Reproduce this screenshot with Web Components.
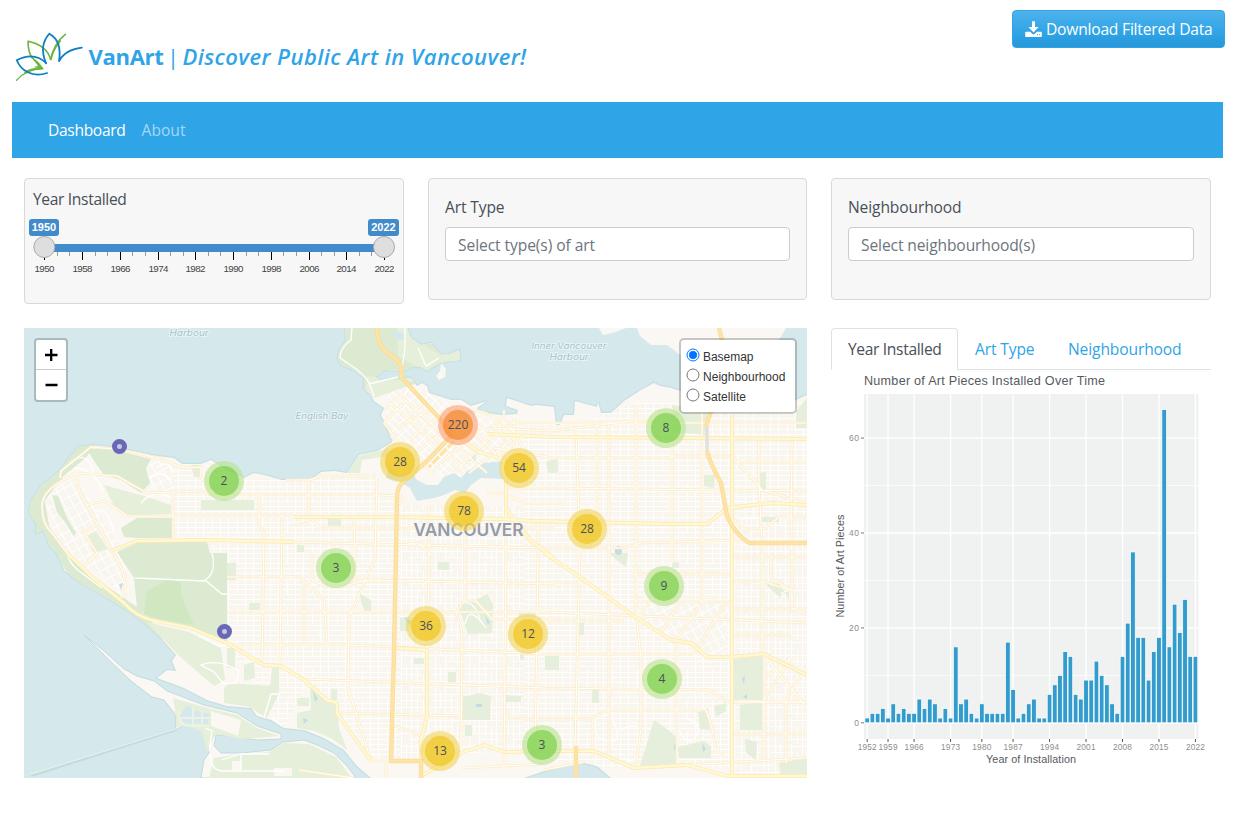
<!DOCTYPE html>
<html lang="en">
<head>
<meta charset="utf-8">
<title>VanArt</title>
<style>
  body { margin: 0; background: #fff; color: #495057; font: 16px/24px "Open Sans", "Noto Sans", sans-serif; }
</style>
</head>
<body>
<van-app></van-app>
<script>
const define = (name, html, setup) => customElements.define(name, class extends HTMLElement {
  connectedCallback() {
    if (this.shadowRoot) return;
    const root = this.attachShadow({ mode: 'open' });
    const t = document.createElement('template');
    t.innerHTML = html;
    root.append(t.content.cloneNode(true));
    if (setup) setup.call(this, root);
  }
});

/* Text run tracked so that it fills the width given in its "w" attribute. */
define('fit-text', `<style>:host{display:inline-block;white-space:nowrap}span{display:inline-block}</style><span></span>`, function (root) {
  const s = root.querySelector('span');
  s.textContent = this.getAttribute('text');
  const w = +this.getAttribute('w');
  const n = s.textContent.length;
  s.style.letterSpacing = ((w - s.getBoundingClientRect().width) / n) + 'px';
});

define('van-logo', `<style>:host{display:block;width:80px;height:90px}svg{display:block;overflow:visible}</style>
<svg width="80" height="90" viewBox="0 0 224 270" preserveAspectRatio="none" fill="none" stroke-linecap="round">
  <g stroke="#6db33f" fill="none">
    <path d="M183 103C160 122 148 145 142 180C137 158 122 134 79 124C78 143 82 160 89 173" stroke-width="4.500"/>
    <path d="M142 178C148 152 160 135 170 122C157 138 150 150 145 165" stroke-width="4"/>
    <path d="M91 174L120 206C88 207 65 218 46 241" stroke-width="3.500"/>
    <path d="M91 174Q110 184 120 206L97 201L107 198Z" fill="#6db33f" stroke-width="1.500"/>
    <path d="M116 206C88 205 76 213 70 218" stroke-width="5"/>
  </g>
  <g stroke="#0b7fc2" stroke-width="5">
    <path d="M129 190C113 149 121 121 138 101C162 115 172 141 165 185C176 160 199 147 229 143"/>
    <path d="M129 189C105 165 77 164 47 181C58 211 90 234 132 219"/>
  </g>
</svg>`);

define('download-button', `<style>
:host{display:block}
button{box-sizing:border-box;width:213px;height:38px;display:flex;align-items:center;padding:0 12px;gap:4px;border:1px solid #2fa4e7;border-radius:4px;background:linear-gradient(#4fb2eb,#2fa4e7 60%,#2797d8);color:#fff;font:15.6px/24px "Open Sans",sans-serif}
svg{flex:none}
</style><button><svg width="17" height="17" viewBox="0 0 17 17" fill="#fff"><path d="M7 .3h3v5.800h3.600L8.500 11.400 3.400 6.100h3.600z"/><path fill-rule="evenodd" d="M1 10.800h4.200l2 2q1.300 1.100 2.600 0l2-2H16q.8 0 .8.8v3.600q0 .8-.8.8H1q-.8 0-.8-.8v-3.600q0-.8.8-.8zM12 13.200h1v1h-1zM14 13.200h1v1h-1z"/></svg><fit-text text="Download Filtered Data" w="166.5"></fit-text></button>`);

define('van-header', `<style>
:host{display:flex;height:102px;align-items:flex-start}
h1{margin:41px 0 0 8.5px;font:700 22px/30px "Open Sans",sans-serif;color:#2fa4e7;display:flex;flex:1}
.sep{font-weight:400;width:19px;text-align:center} em{font-weight:600}
download-button{margin:10px 10px 0 0}
</style><van-logo></van-logo><h1><fit-text text="VanArt" w="75"></fit-text><span class="sep">|</span><em><fit-text text="Discover Public Art in Vancouver!" w="344"></fit-text></em></h1><download-button></download-button>`);

define('van-nav', `<style>
:host{display:flex;align-items:center;gap:16px;margin:0 12px;height:56px;padding-left:36px;background:#2fa4e7;color:#fff;font-size:15.6px}
.off{color:#a4d8f6}
</style><fit-text text="Dashboard" w="77.5"></fit-text><fit-text class="off" text="About" w="44"></fit-text>`);

define('filter-card', `<style>
:host{display:block;box-sizing:border-box;background:#f7f7f7;border:1px solid #d9d9d9;border-radius:4px;height:122px;padding:16px}
:host([slim]){height:126px;padding:8px 4px}
::slotted(.field){box-sizing:border-box;display:flex;align-items:center;margin-top:8px;height:34px;padding:1px 12px 0;border:1px solid #ccc;border-radius:4px;background:#fff;color:#6c757d}
</style><slot></slot>`);

define('year-slider', `<style>:host{display:block;height:62px}svg{display:block}</style><svg width="370" height="62"></svg>`, function (root) {
  const x0 = 15.3, x1 = 355;
  let s = `<rect x="${x0}" y="27" width="${x1 - x0}" height="8" fill="#428bca"/>`;
  for (let i = 0; i <= 27; i++) {
    const x = Math.round(x0 + (x1 - x0) * i / 27), big = i % 3 === 0;
    s += `<rect x="${x}" y="35" width="1" height="${big ? 8 : 4}" fill="${big ? '#000' : '#999'}"/>`;
    if (big) s += `<text x="${x + .5}" y="55" text-anchor="middle" textLength="20" font-size="9.800" fill="#444">${1950 + i / 3 * 8}</text>`;
  }
  for (const x of [x0, x1]) s += `<circle cx="${x}" cy="30" r="10.5" fill="#dedede" stroke="#aaa"/>`;
  s += `<rect x="0" y="2" width="30" height="17" rx="3" fill="#428bca"/><rect x="339" y="2" width="31" height="17" rx="3" fill="#428bca"/>`;
  s += `<g fill="#fff" font-weight="700" font-size="11" text-anchor="middle"><text x="15" y="14">1950</text><text x="354.5" y="14">2022</text></g>`;
  root.querySelector('svg').innerHTML = `<g font-family="Liberation Sans, sans-serif">${s}</g>`;
});

define('cluster-pin', `<style>
:host{position:absolute;box-sizing:border-box;width:40px;height:40px;margin:-20px 0 0 -20px;padding:5px;border-radius:50%;background:rgba(181,226,140,.6);--in:rgba(110,204,57,.6)}
:host([kind=m]){background:rgba(241,211,87,.6);--in:rgba(240,194,12,.6)}
:host([kind=l]){background:rgba(253,156,115,.6);--in:rgba(241,128,23,.6)}
div{width:30px;height:30px;border-radius:50%;background:var(--in);text-align:center;font:12px/30px "Open Sans",sans-serif;color:#495057}
</style><div><slot></slot></div>`);

define('art-pin', `<style>:host{position:absolute;box-sizing:border-box;width:15px;height:15px;margin:-8px 0 0 -8px;border:5px solid #6868b7;border-radius:50%;background:#c6c8e0}</style>`);

define('zoom-control', `<style>
:host{position:absolute;left:10px;top:10px;box-sizing:border-box;width:34px;height:64px;border:2px solid rgba(0,0,0,.2);border-radius:4px;background:#fff;background-clip:padding-box}
svg{display:block}
</style><svg width="30" height="60" stroke="#000" stroke-width="2.300"><path d="M9 15h12.500M15.200 9v12M9.500 45h12"/><path d="M0 29.500h30" stroke="#ccc" stroke-width="1"/></svg>`);

define('layer-control', `<style>
:host{position:absolute;right:10px;top:10px;box-sizing:border-box;width:118px;height:76px;padding:7px 0 0 5px;border:2px solid rgba(0,0,0,.2);border-radius:5px;background:#fff;background-clip:padding-box;font:12px/20px "Liberation Sans",sans-serif;color:#333}
label{display:flex;height:20px;gap:3px} svg{margin-top:1px;flex:none}
</style>
<label><svg width="14" height="14"><circle cx="7" cy="7" r="6" fill="#fff" stroke="#0075ff"/><circle cx="7" cy="7" r="4" fill="#0075ff"/></svg><fit-text text="Basemap" w="50.5"></fit-text></label>
<label><svg width="14" height="14"><circle cx="7" cy="7" r="6" fill="#fff" stroke="#767676"/></svg><fit-text text="Neighbourhood" w="82.500"></fit-text></label>
<label><svg width="14" height="14"><circle cx="7" cy="7" r="6" fill="#fff" stroke="#767676"/></svg><fit-text text="Satellite" w="43"></fit-text></label>`);

define('art-map', `<style>:host{display:block;position:relative;overflow:hidden;height:450px;background:#d5e8eb}svg{display:block}</style>
<svg width="783" height="450" viewBox="0 0 783 450">
<defs>
  <pattern id="g1" width="25" height="31" patternUnits="userSpaceOnUse"><rect width="25" height="31" fill="#f9f5ef"/><path d="M0 3.500H25M0 8.500H25M0 13.500H25M0 18.500H25M0 23.500H25M0 28.500H25M4.500 0V31M13.500 0V18M21.500 0V31" stroke="#fffefd" stroke-width="1" fill="none"/></pattern>
  <pattern id="g2" width="34" height="26" patternUnits="userSpaceOnUse"><rect width="34" height="26" fill="#f9f5ef"/><path d="M0 2.500H34M0 8.500H22M0 15.500H34M12 21.500H34M3.500 0V26M8.500 0V15M13.500 0V26M19.500 0V20M25.500 8V26M30.500 0V26" stroke="#fffefd" stroke-width="1" fill="none"/></pattern>
  <pattern id="g3" width="9" height="6" patternUnits="userSpaceOnUse" patternTransform="rotate(45)"><rect width="9" height="6" fill="#f9f5ef"/><path d="M0 .5H9M.5 0V6" stroke="#fff" stroke-width="1.200"/></pattern>
  <pattern id="g4" width="8" height="10" patternUnits="userSpaceOnUse" patternTransform="rotate(-28)"><rect width="8" height="10" fill="#f9f5ef"/><path d="M0 .5H8M.5 0V10" stroke="#fff"/></pattern>
  <clipPath id="land"><path id="coast" d="M5 185L7 173L17 158L37 142L45 130L55 119L68 117L87 119L113 124L133 128L150 130L158 136L167 136L177 136L187 132L195 137L203 142L212 146L220 150L230 145L240 147L257 152L270 152L285 153L297 144L310 143L323 145L335 127L344 125L353 123L360 119L367 115L369 112L367 110L360 93L357 87L360 80L350 73L347 67L340 60L340 50L330 42L317 37L314 30L315 22L322 13L321 0H383L387 10L397 17L407 15L417 27L426 26L435 22L436 32L426 33L417 35L409 39L403 43L397 39L388 39L380 43L360 42L351 49L360 54L373 50L387 50L393 58L398 55L403 58L405 65L418 69L427 72L437 72L447 78L463 73L453 80L457 85L463 85L477 87L493 86L494 82L482 78L483 70L507 78L512 77L530 79L532 97L536 97L540 87L550 87L551 73L573 79L574 74L577 85L587 85L600 73L617 62L630 55L636 58L647 60L657 63L680 70L700 76L772 72L783 67V450H587L573 438L557 434L540 437L520 443L500 450H347L333 438L320 422L300 410L280 402L260 400L247 392L233 388L227 380L203 378L183 372L160 360L133 350L143 342L152 343L148 333L152 327L137 310L123 297L110 287L87 272L57 255L40 242L33 225L25 217L20 202L12 205L12 195Z"/></clipPath>
</defs>
<rect width="783" height="450" fill="#d5e8eb"/>
<g stroke="#c2dbe1" stroke-width="2.500" fill="none" opacity=".7"><use href="#coast"/></g>
<use href="#coast" fill="#fbf8f3"/>
<path d="M575 0L579 7L592 4L602 0ZM613 0L616 8L627 17L643 17L650 22L657 28L735 35L752 17L762 0ZM417 35L422 41L421 49L415 52L412 48L416 43Z" fill="#fbf8f3"/>
<path d="M60 307L80 323L100 341L113 348L130 353L143 363L180 377L213 385L233 398L257 406V411L233 412L207 408L192 407L190 418L197 425L217 425L247 422L259 414L280 412L293 417L310 425L323 438L332 450H177L180 432L185 425L183 412L177 398L160 397L152 402L151 386L140 372L128 369L107 353L83 330Z" fill="#fbf8f3" stroke="#c2dbe1" stroke-width="1"/>
<g clip-path="url(#land)">
  <path d="M150 137L220 151L352 145V225L260 400L203 315L203 225L149 210Z" fill="url(#g1)"/>
  <path d="M262 165H376V432L346 430L303 372L262 340Z" fill="url(#g1)"/>
  <path d="M376 178H552V418L437 426L376 432Z" fill="url(#g2)"/>
  <path d="M500 95L552 95L612 75H783V440H560L500 422Z" fill="url(#g1)"/>
  <path d="M708 190H783V450H708Z" fill="url(#g2)"/>
  <path d="M365 67L380 54L478 98L500 130L445 145L420 150L375 115L360 90Z" fill="url(#g3)"/>
  <path d="M20 170L52 148L65 170L100 223L105 275L80 250L35 220Z" fill="url(#g4)"/>
  <path d="M605 293L655 315L700 330L705 275H625Z" fill="url(#g4)"/>
  <path d="M125 130L150 138V165L125 160Z" fill="url(#g4)"/>
  <path d="M5 185L7 165L55 119L68 117L60 128L38 146L18 172L23 200L45 232L78 258L110 280L140 310L115 292L57 258L34 228L20 202L12 205Z" fill="#dbead0" stroke="#dbead0" stroke-width="5"/>
  <path d="M63 121L87 121L127 131L122 140L126 155L117 165L97 152L80 147L70 133ZM97 200L113 190H148V210H113L100 209ZM93 224L115 214H183L186 225H203V315L160 297L125 290L113 280L110 250Z" fill="#dbead0"/>
  <path d="M80 157L127 170L147 177V186L103 188L90 178ZM123 294L165 304L197 320L201 352L190 358L175 345L155 328ZM200 360L205 355L246 358L248 340L255 340V365L243 390L225 379L200 375ZM177 172H230V182H177ZM62 208L72 203L84 221L70 225ZM167 137H178V149H170Z" fill="#e6efda"/>
  <path d="M123 263L143 252L157 254L157 268L170 297L140 292L120 287Z" fill="#d1e7c2"/>
  <path d="M28 167L34 168L43 190L52 205L50 208L40 193L33 184Z" fill="#dbead0"/>
  <path d="M203 235H212V252H203ZM225 275H236V282H225ZM203 320H211V340H203ZM220 337L230 334L231 350L220 353ZM304 191H317V198H304ZM273 217H280V224H273ZM335 265L347 272L347 283L340 283ZM273 370H285V378H273ZM307 361H313V372H307ZM286 360L300 370L313 378L315 400L323 422L307 410L290 403L273 400V385L287 382ZM390 330H400V336H390ZM424 344H432V354H424ZM414 234H425V242H414ZM376 290L385 288V303H376ZM434 277L450 273L463 266L469 276L468 305L444 306ZM495 283H512V289H495ZM439 369L455 365L467 368L466 392H438ZM482 367L497 368V374H482ZM521 328H535V342H521ZM555 295H560V307H555ZM568 361H575V375H568ZM441 397H448V408H441ZM496 326H500V332H496ZM323 145L335 128L365 120V128L338 132L336 145ZM440 82L453 82L450 88ZM446 127L452 124L452 133L445 133ZM522 133L534 131V145H524ZM648 77L683 82V107L648 104ZM734 145L742 144V162H734ZM680 147L691 147L690 160L680 158ZM737 189H755V194H737ZM586 225H604L602 239L590 230ZM648 235L655 234V240H648ZM741 254L756 256L765 272V264H757V270L745 260ZM710 331L740 328V372H710ZM716 377L738 374V402H716ZM630 392L643 401L653 409L653 436L616 438ZM654 419L680 413L687 418V430H655ZM674 384L684 380L686 402L676 401ZM721 411L733 414L732 432L722 425ZM755 435L783 430V450H757ZM772 83L783 70V100H772ZM690 378L702 375V383L692 389Z" fill="#e6efdc"/>
  <path d="M315 0H387L397 17L407 15L417 27L436 22L436 32L417 35L403 43L397 39L380 43L378 50L395 55L350 67L340 60L335 45L317 37L312 25Z" fill="#dbead0"/>
  <path d="M373 0L383 0L400 17L417 27L436 22V33L415 34L403 42L392 38L374 28ZM343 48L373 52L388 48L385 58L350 70L342 60Z" fill="#e6efda"/>
  <path d="M368 5L373 3L382 7L380 12L373 12Z" fill="#d5e8eb"/>
</g>
<path d="M149 370L180 379L213 387L233 400L255 408L218 411L192 406L185 418L182 406L162 396L152 400L152 388ZM190 430L215 426L245 424L260 415L285 416L312 429L328 450H185ZM178 403L184 402L188 410L183 424Z" fill="#e6efda"/>
<path d="M187 383L217 392L214 408L187 398ZM208 433H217V442H208ZM250 440H268V448H250Z" fill="#fbf8f3"/>
<path d="M161 379L166 377L168 382L186 386L184 396L160 395L156 388Z" fill="#d5e8eb"/><path d="M155 383Q154 397 164 398H185M169 380V397M157 390H186M178 383V397" stroke="#f1f4e6" stroke-width="1.500" fill="none"/>
<path d="M365 139L375 148L387 143L393 152L403 157L414 157L420 149L430 145L437 150L443 143L460 135L480 133L476 140L480 151L457 150L447 157L441 165L431 162L420 167L410 170L393 173L386 160L373 152L362 150Z" fill="#d5e8eb"/>
<path d="M7 448L152 402" stroke="#c2dbe1" stroke-width="2" fill="none"/><path d="M7 446L152 401" stroke="#e9f1e4" stroke-width="1"/>
<path d="M591 220Q597 214 598 224Q596 230 591 225ZM452 376H458V379H452ZM718 351L721 347L720 357ZM719 369L723 366V371ZM650 416L653 420L650 422ZM678 415L682 421L679 424ZM380 289L388 293L386 298ZM461 288L466 294L464 297ZM289 363L294 371L291 374ZM279 390L284 392L280 396ZM95 256L99 255L97 262Z" fill="#c3dde5"/>
<g fill="none" stroke="#fff" stroke-width="1.300">
  <path d="M328 0L327 12Q316 20 316 30L325 36Q344 48 347 60L350 68M381 0V20L378 40M394 20L402 38L415 30M345 56L374 49M43 225Q45 235 55 243L78 260M188 225Q193 245 181 252L198 266L203 266M111 250L181 253M185 423L188 403L181 400M186 425Q186 442 198 443H260M197 432L217 426H245M217 427V442M175 308L195 318L203 317M177 337Q195 330 215 343L212 355L200 356L190 344ZM132 140Q145 130 148 145M126 150Q140 140 148 155M117 175Q130 160 148 170M45 135Q65 120 70 147M50 140Q72 140 79 165M72 183Q85 180 90 205M240 390L247 366H256M248 390L258 398M438 276Q448 270 456 290M441 296Q445 275 462 300M572 390Q585 380 592 400T575 410Q568 400 572 390M597 402Q620 390 616 415T600 430M660 390Q680 395 672 408T655 402"/>
</g>
<g id="roads"></g>
<path d="M683 98V123" stroke="#e2e1dd" stroke-width="3.500" fill="none"/>
<g font-family="Inter, sans-serif" font-style="italic" text-anchor="middle" font-size="8.500" fill="#a5c4cd" stroke="#eef6f7" stroke-width="1.500" paint-order="stroke">
  <text x="165" y="8.400" textLength="39" lengthAdjust="spacingAndGlyphs">Harbour</text><text x="545" y="21" textLength="75" lengthAdjust="spacingAndGlyphs">Inner Vancouver</text><text x="545" y="32" textLength="39" lengthAdjust="spacingAndGlyphs">Harbour</text><text x="298" y="90.500" textLength="53" lengthAdjust="spacingAndGlyphs">English Bay</text>
</g>
<text x="444.500" y="207.500" text-anchor="middle" textLength="110" lengthAdjust="spacingAndGlyphs" font-family="Inter, sans-serif" font-weight="600" font-size="17" fill="#929bab" stroke="#fbf8f3" stroke-width="1" paint-order="stroke">VANCOUVER</text>
</svg>
<slot></slot>`, function (root) {
  const minor = [
    'M36 150L37 143L67 119L90 121L113 125L133 130L160 140L177 139V150L187 160H200', 'M52 145L93 148L123 165L177 163L187 167H352L380 168',
    'M53 145Q18 160 18 178T28 205L43 225', 'M52 145L56 165L88 223', 'M62 177L80 173Q90 178 103 188H270', 'M72 198L60 204L73 225L58 241', 'M88 223Q100 240 102 260L96 272',
    'M149 164V212', 'M235 167V197L240 205L238 337', 'M258 187L256 338', 'M262 152H285L297 148H352', 'M285 152V188L295 200H530',
    'M330 188L331 225L330 252L352 253H400', 'M353 150L351 230L325 290L324 360L347 433', 'M262 249H276L300 272L303 317', 'M280 255V317', 'M288 225V252Q300 260 320 258L345 252L530 256',
    'M203 249H270', 'M203 284H520L783 295', 'M203 317H325L520 326H667L678 320', 'M260 340L280 351L520 360L685 362L705 374H783', 'M313 385L437 388', 'M480 391H566L584 382H682',
    'M367 396L397 408', 'M262 214L520 220H600L617 215L720 212', 'M441 165V272L432 285Q438 298 438 310L437 425', 'M405 177V250L402 325', 'M482 170V225L480 440', 'M514 193V225L511 430',
    'M552 100L556 225L551 418', 'M573 95V130L573 195', 'M585 94V430', 'M612 77V285L617 330V400L612 438', 'M648 80V235', 'M653 312V435', 'M678 77V275', 'M735 110L735 155L738 215V328', 'M768 112L767 215', 'M768 222V275',
    'M463 100L530 103L612 92H648', 'M470 120L530 130H648V128L708 128', 'M480 160H530L783 163', 'M708 134H783', 'M708 128L738 162L783 175', 'M520 255H565', 'M609 246H708M612 273H708M520 293H600',
    'M708 229H783M708 254H740L767 262M708 281H783M708 307H767M708 374H783M708 406H783M740 328V435M762 374V435', 'M708 190L720 201H740L755 189H783', 'M747 225V250L768 263V280L783 287', 'M440 273H452L468 291H530',
    'M625 275L612 292M655 275L638 303M677 275L652 312M702 275L673 320', 'M740 327L783 380M740 372L767 330M767 330L740 350M783 338L762 372', 'M569 391V430M682 382L688 400L692 422L700 428',
    'M437 440L520 436M520 442L560 434M610 440L783 430', 'M480 82L480 151M470 95H783M490 90V125M450 82Q490 90 500 125', 'M360 83L379 65M366 75L440 140M376 68L463 145M372 100L410 80M385 112L420 85M395 122L430 95M410 140L460 98M430 145L474 102M445 145L490 110M402 72L383 90M450 104L490 145',
    'M383 72L360 95L385 128L410 145', 'M462 165H480L500 175H540', 'M382 170L370 180M385 176L382 178M270 197L285 195M373 217L395 215L410 230', 'M362 435V450M347 433H397M275 442L330 450'
  ];
  const mid = ['M87 223L113 213L187 212L270 214', 'M43 225L67 248L100 275Q112 288 127 292L167 300L203 315L240 337L257 338L280 352L303 372L313 375V385L347 433',
    'M270 189L367 189L480 191L507 193L647 196H683L703 180L747 175L783 177', 'M463 106L530 109L783 111', 'M483 182L507 213L530 230', 'M520 225L560 252L610 288L647 312L667 315L683 329H707L740 326L783 347',
    'M708 87V448', 'M370 320L403 322V388L397 412V434', 'M397 448L437 425L460 417L480 424L520 423H570L610 440L663 437L703 448H783', 'M482 150V190', 'M420 99L455 124L475 130'];
  const hwy = ['M353 0Q353 20 368 28Q380 35 377 49L417 92L427 108L403 133L378 155Q373 160 373 170L372 225L370 325L367 433H397V450', 'M695 0L698 12M687 83L682 98M683 123Q686 135 697 155L703 188Q710 205 725 215H783', 'M552 418V450'];
  const draw = (list, a, wa, b, wb) => `<g fill="none" stroke-linejoin="round"><g stroke="${a}" stroke-width="${wa}">${list.map(d => `<path d="${d}"/>`).join('')}</g><g stroke="${b}" stroke-width="${wb}">${list.map(d => `<path d="${d}"/>`).join('')}</g></g>`;
  root.querySelector('#roads').innerHTML = draw(minor, '#fdecc4', 2.7, '#fffefa', 1.2) + draw(mid, '#fde7b4', 3.8, '#fff9d2', 2.4) + draw(hwy, '#fbdc96', 4.4, '#fee3a6', 3) +
    '<path d="M425 110L400 136M430 113L405 139" stroke="#fee3a6" stroke-width="3" stroke-dasharray="9 2"/>';
});

define('tab-bar', `<style>
:host{display:flex;box-sizing:border-box;height:42px;border-bottom:1px solid #dee2e6;color:#2fa4e7;font-size:15.6px}
div{box-sizing:border-box;height:42px;padding:8px 16px;border:1px solid transparent}
.on{color:#495057;background:#fff;border-color:#dee2e6 #dee2e6 #fff;border-radius:4px 4px 0 0;width:127px}
.b{width:93px}
</style><div class="on"><fit-text text="Year Installed" w="93.500"></fit-text></div><div class="b"><fit-text text="Art Type" w="59.500"></fit-text></div><div><fit-text text="Neighbourhood" w="113.500"></fit-text></div>`);

define('year-chart', `<style>:host{display:block}svg{display:block}</style><svg width="380" height="400" viewBox="831 370 380 400"></svg>`, function (root) {
  const v = [1,2,2,3,1,4,2,3,2,2,5,3,5,4,1,3,1,16,4,5,2,1,4,2,2,2,2,17,7,1,2,4,5,1,1,6,8,10,15,14,6,5,9,9,13,10,8,4,2,14,21,36,18,18,9,15,18,66,16,25,19,26,14,14];
  const X = i => 867.2 + i * 5.21, Y = n => 722.8 - n * 4.745;
  let s = '<rect x="864" y="394" width="334.500" height="345" fill="#f0f2f2"/>';
  for (const n of [10, 30, 50]) s += `<path d="M864 ${Y(n)}H1198.500" stroke="#fff" stroke-width=".7"/>`;
  for (const n of [0, 20, 40, 60]) s += `<path d="M864 ${Y(n)}H1198.500" stroke="#fff" stroke-width="1.300"/><path d="M861 ${Y(n)}H864" stroke="#777"/><text x="859" y="${Y(n) + 3}" text-anchor="end" font-size="8.500" fill="#8d8d8d" ${n ? 'textLength="10"' : ''}>${n}</text>`;
  [0, 4, 9, 16, 22, 28, 35, 42, 49, 56, 63].forEach((i, k) => {
    s += `<path d="M${X(i)} 394V739" stroke="#fff" stroke-width="1.300"/><path d="M${X(i)} 739V742" stroke="#555"/><text x="${X(i)}" y="750" text-anchor="middle" font-size="8.300" fill="#8d8d8d" textLength="19">${1952 + 7 * k}</text>`;
  });
  v.forEach((n, i) => { s += `<rect x="${X(i) - 2.3}" y="${Y(n)}" width="4.600" height="${n * 4.745}" fill="#339ccc" stroke="#fff" stroke-width=".7"/>`; });
  s += `<text x="864" y="385" font-size="12.600" textLength="241" fill="#555a61">Number of Art Pieces Installed Over Time</text>
  <text x="1031" y="763" font-size="10.800" text-anchor="middle" textLength="90" fill="#555a61">Year of Installation</text>
  <text transform="translate(844 566) rotate(-90)" font-size="10.800" text-anchor="middle" textLength="103" fill="#555a61">Number of Art Pieces</text>`;
  root.querySelector('svg').innerHTML = `<g font-family="Liberation Sans, sans-serif">${s}</g>`;
});

define('van-app', `<style>
:host{display:block;width:1235px}
.filters,.main{display:grid;grid-template-columns:380px 379px 380px;column-gap:24px;align-items:start;margin-left:24px}
.filters{margin-top:20px;height:150px;font-size:15.6px}
.main{grid-template-columns:783px 380px}
.t{padding-left:4px;display:block}
year-slider{margin-top:6px}
</style>
<van-header></van-header><van-nav></van-nav>
<section class="filters">
<filter-card slim><fit-text class="t" text="Year Installed" w="93.500"></fit-text><year-slider></year-slider></filter-card>
<filter-card><fit-text text="Art Type" w="59.500"></fit-text><div class="field"><fit-text text="Select type(s) of art" w="137"></fit-text></div></filter-card>
<filter-card><fit-text text="Neighbourhood" w="113.500"></fit-text><div class="field"><fit-text text="Select neighbourhood(s)" w="174"></fit-text></div></filter-card>
</section>
<section class="main"><art-map></art-map><div><tab-bar></tab-bar><year-chart></year-chart></div></section>`, function (root) {
  const map = root.querySelector('art-map');
  const pins = [[434,97,220,'l'],[376,134,28,'m'],[495,140,54,'m'],[440,183,78,'m'],[563,201,28,'m'],[642,100,8],[200,153,2],[312,240,3],[402,298,36,'m'],[504,306,12,'m'],[640,258,9],[638,351,4],[416,423,13,'m'],[518,417,3]];
  map.innerHTML = pins.map(([x, y, n, k]) => `<cluster-pin kind="${k || 's'}" style="left:${x}px;top:${y}px">${n}</cluster-pin>`).join('') +
    '<art-pin style="left:96px;top:119px"></art-pin><art-pin style="left:201px;top:304px"></art-pin><zoom-control></zoom-control><layer-control></layer-control>';
});
</script>
</body>
</html>
